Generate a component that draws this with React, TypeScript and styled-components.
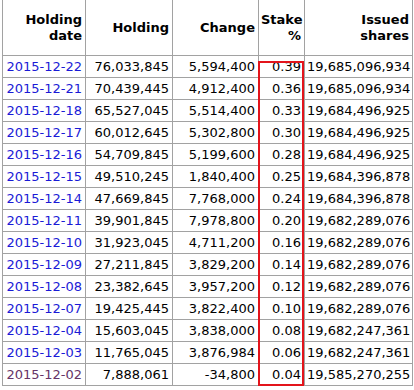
import styled, { createGlobalStyle } from "styled-components";

const GlobalStyle = createGlobalStyle`
  html, body {
    margin: 0;
    padding: 0;
    background: #ffffff;
  }
  body {
    font-family: "DejaVu Sans", Verdana, sans-serif;
  }
`;

const Wrapper = styled.div`
  position: relative;
  width: 414px;
  height: 390px;
  overflow: hidden;
  padding-left: 2px;
  box-sizing: border-box;
`;

const Table = styled.table`
  border-collapse: collapse;
  table-layout: fixed;
  width: 411px;
  margin-top: -1px;
  font-size: 13px;
  color: #000;
  border-right: 1px solid #7a7a7a;
`;

const HeadCell = styled.th<{ $w: number }>`
  width: ${(p) => p.$w}px;
  height: 56px;
  padding: 0 3px 0 2px;
  border: 1px solid #a2a2a2;
  text-align: right;
  vertical-align: middle;
  font-weight: bold;
  font-size: 13px;
  line-height: 16px;
  box-sizing: border-box;
`;

const Row = styled.tr`
  height: 22px;
`;

const Cell = styled.td`
  padding: 0 3px 0 2px;
  border: 1px solid #a2a2a2;
  text-align: right;
  vertical-align: middle;
  white-space: nowrap;
  line-height: 15px;
`;

const DateLink = styled.a<{ $visited?: boolean }>`
  color: ${(p) => (p.$visited ? "#663366" : "#1a1ad6")};
  text-decoration: none;
`;

const Highlight = styled.div`
  position: absolute;
  left: 258px;
  top: 61px;
  width: 46px;
  height: 325px;
  border: 2px solid #e3141b;
  box-sizing: border-box;
  pointer-events: none;
`;

const rows: [string, string, string, string, string][] = [
  ["2015-12-22", "76,033,845", "5,594,400", "0.39", "19,685,096,934"],
  ["2015-12-21", "70,439,445", "4,912,400", "0.36", "19,685,096,934"],
  ["2015-12-18", "65,527,045", "5,514,400", "0.33", "19,684,496,925"],
  ["2015-12-17", "60,012,645", "5,302,800", "0.30", "19,684,496,925"],
  ["2015-12-16", "54,709,845", "5,199,600", "0.28", "19,684,496,925"],
  ["2015-12-15", "49,510,245", "1,840,400", "0.25", "19,684,396,878"],
  ["2015-12-14", "47,669,845", "7,768,000", "0.24", "19,684,396,878"],
  ["2015-12-11", "39,901,845", "7,978,800", "0.20", "19,682,289,076"],
  ["2015-12-10", "31,923,045", "4,711,200", "0.16", "19,682,289,076"],
  ["2015-12-09", "27,211,845", "3,829,200", "0.14", "19,682,289,076"],
  ["2015-12-08", "23,382,645", "3,957,200", "0.12", "19,682,289,076"],
  ["2015-12-07", "19,425,445", "3,822,400", "0.10", "19,682,289,076"],
  ["2015-12-04", "15,603,045", "3,838,000", "0.08", "19,682,247,361"],
  ["2015-12-03", "11,765,045", "3,876,984", "0.06", "19,682,247,361"],
  ["2015-12-02", "7,888,061", "-34,800", "0.04", "19,585,270,255"],
];

export default function App() {
  return (
    <>
      <GlobalStyle />
      <Wrapper>
        <Table>
          <thead>
            <tr>
              <HeadCell $w={83}>
                Holding
                <br />
                date
              </HeadCell>
              <HeadCell $w={87}>Holding</HeadCell>
              <HeadCell $w={86}>Change</HeadCell>
              <HeadCell $w={46}>
                Stake
                <br />%
              </HeadCell>
              <HeadCell $w={108}>
                Issued
                <br />
                shares
              </HeadCell>
            </tr>
          </thead>
          <tbody>
            {rows.map((r, i) => (
              <Row key={r[0]}>
                <Cell>
                  <DateLink href="#" $visited={i === rows.length - 1}>
                    {r[0]}
                  </DateLink>
                </Cell>
                <Cell>{r[1]}</Cell>
                <Cell>{r[2]}</Cell>
                <Cell>{r[3]}</Cell>
                <Cell>{r[4]}</Cell>
              </Row>
            ))}
          </tbody>
        </Table>
        <Highlight />
      </Wrapper>
    </>
  );
}
